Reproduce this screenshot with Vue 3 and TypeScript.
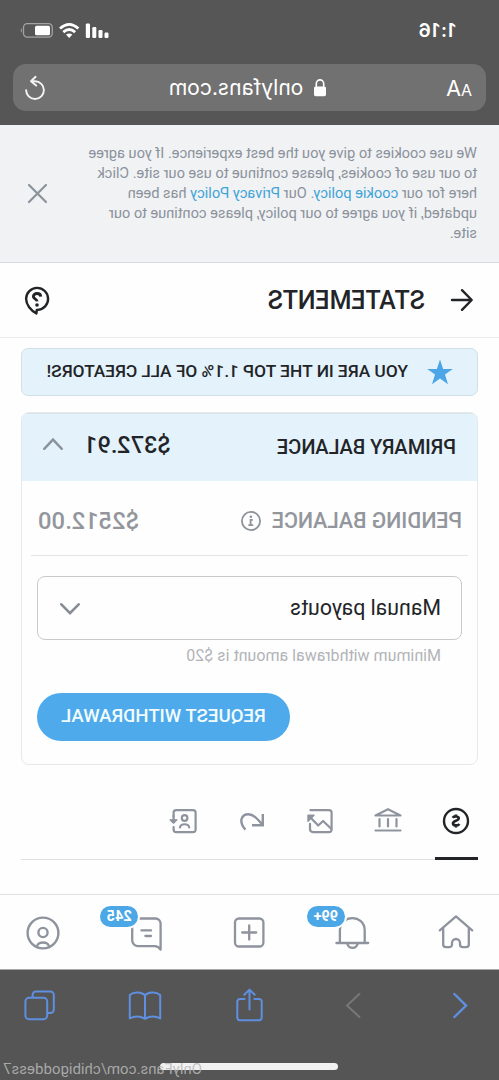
<script setup lang="ts">
import { ref } from 'vue'

interface Line {
  text: string
  link?: boolean
}

const cookieLines: Line[][] = [
  [{ text: 'We use cookies to give you the best experience. If you agree' }],
  [{ text: 'to our use of cookies, please continue to use our site. Click' }],
  [
    { text: 'here for our ' },
    { text: 'cookie policy', link: true },
    { text: '. Our ' },
    { text: 'Privacy Policy', link: true },
    { text: ' has been' },
  ],
  [{ text: 'updated, if you agree to our policy, please continue to our' }],
  [{ text: 'site.' }],
]

const primary = ref('$372.91')
const pending = ref('$2512.00')
const alerts = ref('99+')
const messages = ref('245')
</script>

<template>
  <div class="phone">
    <header class="browser-top">
      <div class="status">
        <span class="time">1:16</span>
        <svg class="signals" width="90" height="18" viewBox="0 0 90 18">
          <g fill="#fff">
            <rect x="0.5" y="10.5" width="4" height="5.5" rx="1.2" />
            <rect x="6.5" y="8" width="4" height="8" rx="1.2" />
            <rect x="12.7" y="5" width="4" height="11" rx="1.2" />
            <rect x="19" y="1.5" width="4.2" height="14.5" rx="1.2" />
            <path d="M39.8 16 L36.6 12.6 Q39.8 10.2 43 12.6Z" />
          </g>
          <g fill="none" stroke="#fff" stroke-width="2.8">
            <path d="M30.6 6.5 Q39.8 -1.7 49 6.5" />
            <path d="M33.9 10.1 Q39.8 4.9 45.7 10.1" />
          </g>
          <rect x="56.7" y="1.7" width="28.8" height="13.4" rx="3.8" fill="none" stroke="#a3a3a3" stroke-width="1.3" />
          <rect x="59" y="3.7" width="15" height="9.6" rx="1.6" fill="#fff" />
          <path d="M87.2 6 Q89.4 8.3 87.2 10.8Z" fill="#a3a3a3" />
        </svg>
      </div>
      <div class="address">
        <span class="aa"><small>A</small>A</span>
        <span class="host">
          <svg width="12" height="18" viewBox="0 0 12 18">
            <rect x="0" y="7.4" width="12" height="9.8" rx="1.6" fill="#fff" />
            <path d="M2.3 8 V4.6 a3.7 3.7 0 0 1 7.4 0 V8" fill="none" stroke="#fff" stroke-width="1.6" />
          </svg>
          <span>onlyfans.com</span>
        </span>
        <svg class="reload" width="20" height="24" viewBox="0 0 20 24" fill="none" stroke="#f4f4f4" stroke-width="1.9" stroke-linecap="round" stroke-linejoin="round">
          <path d="M12.6 5.2 H10 A8.9 8.9 0 1 0 18.9 14.1" />
          <path d="M9.4 0.8 L14 5.2 L8.8 9.6" />
        </svg>
      </div>
    </header>

    <section class="cookies">
      <p>
        <span v-for="(line, i) in cookieLines" :key="i" class="cookie-line"><span v-for="(part, j) in line" :key="j" :class="{ link: part.link }">{{ part.text }}</span></span>
      </p>
      <svg width="19" height="19" viewBox="0 0 19 19" fill="none" stroke="#8a929c" stroke-width="2.2" stroke-linecap="round">
        <path d="M1 1 L18 18 M18 1 L1 18" />
      </svg>
    </section>

    <section class="title">
      <svg width="22" height="22" viewBox="0 0 22 22" fill="none" stroke="#222427" stroke-width="2.4" stroke-linecap="round" stroke-linejoin="round">
        <path d="M21 11 H1.6 M11 1.2 L1.3 11 L11 20.8" />
      </svg>
      <h1>STATEMENTS</h1>
      <svg class="help" width="24" height="28" viewBox="0 0 24 28" fill="none" stroke="#222427" stroke-width="2.4" stroke-linejoin="round">
        <path d="M11.4 22.9 A11 11 0 1 1 22.9 11.8 C22.9 17.8 18.2 23.5 12.6 26.4 L12.2 23 Z" />
        <path d="M8.2 9.6 C8.6 5.3 15.8 5.6 15.6 9.6 C15.4 12 12.3 11.7 11.9 14.4" stroke-width="2.9" />
        <circle cx="12" cy="18" r="1.8" fill="#222427" stroke="none" />
      </svg>
    </section>

    <main>
      <div class="banner">
        <svg width="26" height="26" viewBox="0 0 26 26" fill="#4ba5e6">
          <path d="M13 0.5 L16.1 9.9 H25.8 L18 15.6 L21 25.2 L13 19.4 L5 25.2 L8 15.6 L0.2 9.9 H9.9Z" />
        </svg>
        <span>YOU ARE IN THE TOP 1.1% OF ALL CREATORS!</span>
      </div>

      <div class="card">
        <div class="primary">
          <span class="primary-label">PRIMARY BALANCE</span>
          <span class="primary-sum">{{ primary }}</span>
          <svg width="20" height="12" viewBox="0 0 20 12" fill="none" stroke="#8a939c" stroke-width="2.4" stroke-linecap="round">
            <path d="M1.2 10.8 L10 1.6 L18.8 10.8" />
          </svg>
        </div>
        <div class="pending">
          <span class="pending-label">PENDING BALANCE</span>
          <svg width="20" height="20" viewBox="0 0 20 20" fill="none" stroke="#8e9299" stroke-width="1.8">
            <circle cx="10" cy="10" r="9.1" />
            <path d="M8.2 8.9 H10.4 V14 M7.8 14.1 H12.6" />
            <circle cx="10.1" cy="5.7" r="1.3" fill="#8e9299" stroke="none" />
          </svg>
          <span class="pending-sum">{{ pending }}</span>
        </div>
        <div class="payout">
          <div class="select">
            <span>Manual payouts</span>
            <svg width="20" height="12" viewBox="0 0 20 12" fill="none" stroke="#878b93" stroke-width="2.6" stroke-linecap="round">
              <path d="M1.3 1.3 L10 10.2 L18.7 1.3" />
            </svg>
          </div>
          <p class="hint">Minimum withdrawal amount is $20</p>
          <button type="button">REQUEST WITHDRAWAL</button>
        </div>
      </div>

      <nav class="tabs">
        <span class="tab active">
          <svg width="28" height="28" viewBox="0 0 28 28" fill="none" stroke="#222427" stroke-width="2.4">
            <circle cx="14" cy="14" r="12" />
            <path d="M17.3 10.8 C15.8 8.7 11.1 9.2 11.3 11.6 C11.5 14 17 13.5 17 16.3 C17 18.9 12.2 19.2 10.6 16.9 M14 7.4 V10 M14 18 V20.5" stroke-width="2.7" />
          </svg>
        </span>
        <span class="tab">
          <svg width="28" height="28" viewBox="0 0 28 28" fill="none" stroke="#8e939d" stroke-width="2.2" stroke-linejoin="round" stroke-linecap="round">
            <path d="M1.5 8.5 L14 2.2 L26.5 8.5 Z M5.5 12.2 V19.4 M14 12.2 V19.4 M22.5 12.2 V19.4 M1.5 23.5 H26.5" />
          </svg>
        </span>
        <span class="tab">
          <svg width="28" height="28" viewBox="0 0 28 28" fill="none" stroke="#8e939d" stroke-width="2.2" stroke-linejoin="round" stroke-linecap="round">
            <path d="M23.5 3.2 H5 a2.6 2.6 0 0 0 -2.6 2.6 V22.5 a2.6 2.6 0 0 0 2.6 2.6 H21 a3 3 0 0 0 3 -3 V16.8" />
            <path d="M2.8 21.8 L10.9 14 L15.8 18.5 L24 10" />
            <path d="M20 8.2 H26 V14.2 Z" fill="#8e939d" stroke-width="1.4" />
          </svg>
        </span>
        <span class="tab">
          <svg width="28" height="28" viewBox="0 0 28 28" fill="none" stroke="#8e939d" stroke-width="2.4" stroke-linejoin="miter">
            <path d="M3.2 7 V18.2 H14 M3.4 17.8 C8.5 12 12.5 7.2 17.6 7.2 C24.8 7.2 27.6 15 20.6 22.6" />
          </svg>
        </span>
        <span class="tab">
          <svg width="28" height="28" viewBox="0 0 28 28" fill="none" stroke="#8e939d" stroke-width="2.2" stroke-linejoin="round" stroke-linecap="round">
            <path d="M24.4 9.5 V5.8 a2.6 2.6 0 0 0 -2.6 -2.6 H5 a2.6 2.6 0 0 0 -2.6 2.6 V22.5 a2.6 2.6 0 0 0 2.6 2.6 H21.8 a2.6 2.6 0 0 0 2.6 -2.6 V20" />
            <circle cx="13.4" cy="11" r="2.8" />
            <path d="M8.8 20.4 C9.6 16.2 17.2 16.2 18 20.4" />
            <path d="M21 12.8 H28 L24.5 16.2 Z" fill="#8e939d" stroke-width="1.2" />
            <path d="M24.4 9 V13" />
          </svg>
        </span>
      </nav>
    </main>

    <nav class="app-nav">
      <span class="item">
        <svg width="36" height="36" viewBox="0 0 36 36" fill="none" stroke="#8e939d" stroke-width="2.3" stroke-linejoin="round" stroke-linecap="round">
          <path d="M1.8 16.4 L18 2.4 L34.2 16.4 M5.2 14 V30.6 a2.6 2.6 0 0 0 2.6 2.6 H11.4 a2.6 2.6 0 0 0 2.6 -2.6 V29 a4 4 0 0 1 8 0 V30.6 a2.6 2.6 0 0 0 2.6 2.6 H28.2 a2.6 2.6 0 0 0 2.6 -2.6 V14" />
        </svg>
      </span>
      <span class="item">
        <svg width="36" height="36" viewBox="0 0 36 36" fill="none" stroke="#8e939d" stroke-width="2.3" stroke-linejoin="round" stroke-linecap="round">
          <path d="M2.8 29 H34.6 M6.3 29 V16.5 C6.3 0 31.1 0 31.1 16.5 V29 M13.4 30 a5.3 5.3 0 0 0 10.2 0" />
        </svg>
        <b class="badge">{{ alerts }}</b>
      </span>
      <span class="item">
        <svg width="36" height="36" viewBox="0 0 36 36" fill="none" stroke="#8e939d" stroke-width="2.3" stroke-linecap="round">
          <rect x="3.6" y="4.5" width="28.4" height="28" rx="4" />
          <path d="M17.8 11.5 V25.5 M10.8 18.5 H24.8" />
        </svg>
      </span>
      <span class="item">
        <svg width="36" height="36" viewBox="0 0 36 36" fill="none" stroke="#8e939d" stroke-width="2.3" stroke-linejoin="round" stroke-linecap="round">
          <path d="M3.4 35.6 V9.5 a5 5 0 0 1 5 -5 H25.8 a6 6 0 0 1 6 6 V26.2 a6 6 0 0 1 -6 6 H9.4 Q5.6 32.2 3.4 35.6" />
          <path d="M13 16.4 H22.6 M13 22 H18.6" />
        </svg>
        <b class="badge">{{ messages }}</b>
      </span>
      <span class="item">
        <svg width="36" height="36" viewBox="0 0 36 36" fill="none" stroke="#8e939d" stroke-width="2.4" stroke-linecap="round">
          <circle cx="18" cy="19" r="15.4" />
          <circle cx="18" cy="18.5" r="4.6" />
          <path d="M12.2 31.6 C14 27.4 22 27.4 23.8 31.6" />
        </svg>
      </span>
    </nav>

    <footer class="browser-bottom">
      <div class="tools">
        <svg width="34" height="34" viewBox="0 0 34 34" fill="none" stroke="#5f8fe0" stroke-width="2.4" stroke-linecap="round">
          <path d="M22.6 6 L10.9 17.6 L22.6 29" />
        </svg>
        <svg width="34" height="34" viewBox="0 0 34 34" fill="none" stroke="#777" stroke-width="2" stroke-linecap="round">
          <path d="M12.6 6 L25 17.6 L12.6 29" />
        </svg>
        <svg width="34" height="34" viewBox="0 0 34 34" fill="none" stroke="#5f8fe0" stroke-width="2" stroke-linecap="round" stroke-linejoin="round">
          <path d="M12.7 11 H7.9 a2.6 2.6 0 0 0 -2.6 2.6 V29.6 a2.6 2.6 0 0 0 2.6 2.6 H27.1 a2.6 2.6 0 0 0 2.6 -2.6 V13.6 a2.6 2.6 0 0 0 -2.6 -2.6 H22.3 M17.5 21.5 V1.8 M12.3 6.8 L17.5 1.6 L22.7 6.8" />
        </svg>
        <svg width="34" height="34" viewBox="0 0 34 34" fill="none" stroke="#5f8fe0" stroke-width="2" stroke-linejoin="round">
          <path d="M17 7.4 C14 4 6 3.4 1.8 7 V30.4 Q9.5 26.4 17 30.8 Q24.5 26.4 32.2 30.4 V7 C28 3.4 20 4 17 7.4 V30.8" />
        </svg>
        <svg width="34" height="34" viewBox="0 0 34 34" fill="none" stroke="#5f8fe0" stroke-width="2" stroke-linejoin="round">
          <rect x="9.8" y="9.8" width="21.8" height="21.4" rx="3.6" />
          <path d="M9.8 25 H6.6 a3.4 3.4 0 0 1 -3.4 -3.4 V6.8 a3.4 3.4 0 0 1 3.4 -3.4 H21 a3.4 3.4 0 0 1 3.4 3.4 V9.8" />
        </svg>
      </div>
      <div class="indicator"></div>
      <span class="watermark">OnlyFans.com/chibigoddess7</span>
    </footer>
  </div>
</template>

<style>
body {
  background: #fff;
}
</style>

<style scoped>
/* The whole screen is shown as a mirror image. */
.phone {
  width: 499px;
  height: 1080px;
  overflow: hidden;
  display: flex;
  flex-direction: column;
  background: #fefefe;
  font-family: Roboto, "Liberation Sans", sans-serif;
  color: #222427;
  transform: scaleX(-1);
}
.phone * {
  box-sizing: border-box;
}
svg {
  display: block;
  flex: none;
  overflow: visible;
}
span,
h1 {
  white-space: pre;
}
.browser-top {
  flex: none;
  height: 125px;
  background: #565656;
  color: #fff;
}
.status {
  height: 64px;
  padding: 22px 19px 0 43px;
  display: flex;
  justify-content: space-between;
  align-items: flex-start;
}
.time {
  font: 600 19px/18px Inter, sans-serif;
  letter-spacing: 1px;
}
.address {
  height: 47px;
  margin: 0 13px;
  padding: 0 12px 0 14px;
  border-radius: 13px;
  background: #717171;
  display: flex;
  align-items: center;
  justify-content: space-between;
  font-family: Inter, sans-serif;
}
.aa {
  width: 22px;
  margin-top: 3px;
  font-size: 21.5px;
  line-height: 24px;
}
.aa small {
  font-size: 16px;
}
.host {
  display: flex;
  gap: 11px;
  align-items: center;
  font-size: 21.1px;
  line-height: 26px;
}
.cookies {
  flex: none;
  height: 138px;
  padding: 18px 28px 0 22px;
  background: #f0f2f4;
  border-bottom: 1px solid #d5dadf;
  display: flex;
  justify-content: space-between;
}
.cookies p {
  margin: 0;
  font-size: 14.6px;
  line-height: 20px;
  color: #8b919b;
}
.cookie-line {
  display: block;
}
.link {
  color: #3fa3d8;
}
.cookies svg {
  margin-top: 41px;
}
.title {
  flex: none;
  height: 75px;
  padding: 0 25px 0 26px;
  border-bottom: 1px solid #e8eaec;
  display: flex;
  align-items: center;
}
.title h1 {
  margin: 2px auto 0 26px;
  font-size: 25px;
  line-height: 30px;
  font-weight: 500;
}
.help {
  margin-top: 2px;
}
main {
  flex: none;
  height: 556px;
  padding: 10px 21px 0;
}
.banner {
  height: 48px;
  padding: 0 24px;
  border: 1px solid #d2e0e8;
  border-radius: 7px;
  background: #e3f2fb;
  display: flex;
  align-items: center;
  gap: 19px;
  font-size: 17.3px;
  font-weight: 500;
}
.banner span {
  margin-top: -2px;
}
.card {
  height: 353px;
  margin-top: 16px;
  border: 1px solid #e6e8ea;
  border-radius: 8px;
  overflow: hidden;
}
.primary {
  height: 68px;
  padding: 0 21px;
  background: #e3f2fb;
  box-shadow: inset 0 1px #d8e4ea;
  display: flex;
  align-items: center;
}
.primary-label {
  font-size: 19.9px;
  font-weight: 500;
}
.primary-sum {
  margin: -4px 21px 0 auto;
  font-size: 23.5px;
  font-weight: 500;
}
.primary svg {
  margin-top: -6px;
}
.pending {
  height: 75px;
  margin: 0 9px;
  padding: 5px 7px 0 6px;
  border-bottom: 1px solid #e3e4e7;
  display: flex;
  align-items: center;
  color: #93969c;
}
.pending-label {
  margin-right: 11px;
  font-size: 21.3px;
  font-weight: 500;
}
.pending-sum {
  margin-left: auto;
  font-size: 23.8px;
  font-weight: 500;
}
.payout {
  padding: 20px 15px 0;
}
.select {
  height: 64px;
  padding: 0 22px 1px 20px;
  border: 1.5px solid #c8cacd;
  border-radius: 8px;
  display: flex;
  align-items: center;
  justify-content: space-between;
  font-size: 21.3px;
}
.select svg {
  margin-top: 2px;
}
.hint {
  margin: 6px 0 0 21px;
  font-size: 16px;
  line-height: 20px;
  color: #b2b4b8;
}
button {
  display: block;
  width: 253px;
  height: 48px;
  margin: 27px 0 0 auto;
  padding: 0 0 2px;
  border: 0;
  border-radius: 24px;
  background: #4eaaea;
  color: #f2fcff;
  font: 500 18.6px Roboto, sans-serif;
  white-space: nowrap;
}
.tabs {
  height: 95px;
  display: flex;
  gap: 25px;
  border-bottom: 1px solid #dfe2e5;
}
.tab {
  width: 43px;
  height: 95px;
  padding-top: 42px;
  display: flex;
  justify-content: center;
  align-items: flex-start;
}
.active {
  border-bottom: 3px solid #222427;
}
.app-nav {
  flex: none;
  height: 75px;
  padding: 19px 25px 0;
  border-top: 1px solid #dfe1e4;
  display: flex;
  justify-content: space-between;
}
.item {
  position: relative;
  width: 36px;
  height: 36px;
}
.badge {
  position: absolute;
  left: 24px;
  top: -10px;
  width: 42px;
  height: 25px;
  border: 2px solid #fefefe;
  border-radius: 13px;
  background: #4ba7e6;
  color: #fff;
  font-size: 14.5px;
  line-height: 21px;
  font-weight: 700;
  text-align: center;
}
.browser-bottom {
  position: relative;
  flex: 1;
  background: #555;
  border-top: 1px solid #a9a9a9;
}
.tools {
  height: 93px;
  padding: 18px 23px 0 22px;
  display: flex;
  justify-content: space-between;
}
.indicator {
  width: 178px;
  height: 7px;
  margin: 0 auto;
  border-radius: 4px;
  background: #f1f1f1;
}
.watermark {
  position: absolute;
  left: 297px;
  bottom: 1px;
  font-size: 15px;
  line-height: 20px;
  color: rgba(185, 185, 185, 0.85);
}
</style>
